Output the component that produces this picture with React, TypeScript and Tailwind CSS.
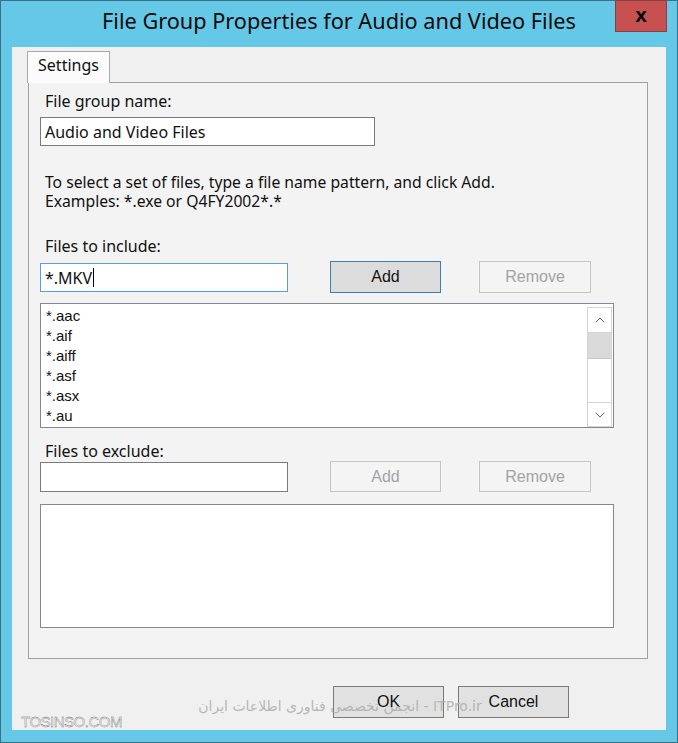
import { ChevronUp, ChevronDown } from 'lucide-react';

const items = ['*.aac', '*.aif', '*.aiff', '*.asf', '*.asx', '*.au'];

const ui = { fontFamily: '"Noto Sans", "Open Sans", sans-serif' };
const classic = { fontFamily: '"Liberation Sans", Arial, sans-serif' };

const Btn = ({ label, state }: { label: string; state: 'focus' | 'off' | 'normal' }) => {
  const tone =
    state === 'focus'
      ? 'bg-[#dcdcdc] border-[#3c7fb1] text-[#111]'
      : state === 'off'
      ? 'bg-[#f4f4f4] border-[#c4c4c4] text-[#a3a3a3]'
      : 'bg-[#e1e1e1] border-[#7a7a7a] text-[#111]';
  return (
    <div className={`flex items-center justify-center border text-[16px] ${tone}`} style={classic}>
      {label}
    </div>
  );
};

const ScrollBar = () => (
  <div className="flex flex-col w-[25px] border border-[#d4d4d4] bg-white">
    <div className="h-[25px] flex items-center justify-center border-b border-[#d4d4d4] text-[#606060]">
      <ChevronUp size={16} strokeWidth={1.5} />
    </div>
    <div className="h-[26px] bg-[#dadada] border-b border-[#c6c6c6]" />
    <div className="flex-1" />
    <div className="h-[24px] flex items-center justify-center border-t border-[#d4d4d4] text-[#606060]">
      <ChevronDown size={16} strokeWidth={1.5} />
    </div>
  </div>
);

export default function App() {
  return (
    <div className="relative w-[678px] h-[743px] bg-[#65c8e7] border border-[#3a6f84] flex flex-col" style={ui}>
      {/* title bar */}
      <div className="h-[46px] grid grid-cols-[1fr_auto_1fr]">
        <div />
        <div className="pt-[6px] text-[21.7px] leading-[28px] text-[#0b0b0b] whitespace-nowrap">
          File Group Properties for Audio and Video Files
        </div>
        <div className="flex justify-end pr-[10px]">
          <div className="w-[52px] h-[32px] -mt-px bg-[#c75050] border border-[#8a3f3f] flex items-center justify-center">
            <span className="text-[21px] font-bold leading-none text-black -mt-[3px]" style={classic}>
              x
            </span>
          </div>
        </div>
      </div>

      {/* client area */}
      <div className="mx-[11px] h-[683px] bg-[#f0f0f0] flex flex-col">
        <div className="pl-[15px] pt-[4px]">
          <div className="w-[83px] h-[32px] pb-[5px] bg-[#fbfbfb] border border-b-0 border-[#a9a9a9] flex items-center justify-center text-[16px] text-[#111] -mb-px relative z-10">
            Settings
          </div>
        </div>

        <div className="ml-[16px] w-[620px] h-[577px] border border-[#a0a0a0] bg-[#f3f3f3] pl-[11px] flex flex-col text-[16px] text-[#111]">
          <div className="mt-[8px] ml-[5px] leading-[20px]">File group name:</div>
          <div className="mt-[6px] w-[335px] h-[29px] bg-white border border-[#7a7a7a] flex items-center pl-[4px] leading-none">
            Audio and Video Files
          </div>

          <div className="mt-[27px] ml-[5px] text-[15.7px] leading-[19px]">
            <div>To select a set of files, type a file name pattern, and click Add.</div>
            <div>Examples: *.exe or Q4FY2002*.*</div>
          </div>

          <div className="mt-[25px] ml-[5px] leading-[20px]">Files to include:</div>
          <div className="mt-[5px] flex items-start">
            <div className="mt-[2px] w-[248px] h-[29px] bg-white border border-[#569de5] flex items-center pl-[4px] leading-none">
              *.MKV<span className="w-px h-[19px] bg-black ml-[1px]" />
            </div>
            <div className="ml-[42px] w-[111px] h-[32px] grid">
              <Btn label="Add" state="focus" />
            </div>
            <div className="ml-[38px] w-[112px] h-[32px] grid">
              <Btn label="Remove" state="off" />
            </div>
          </div>

          <div className="mt-[10px] w-[574px] h-[125px] bg-white border border-[#828790] flex">
            <div className="flex-1 pl-[5px] pt-[2px] text-[15px] leading-[20px] text-[#111]" style={classic}>
              {items.map((it) => (
                <div key={it}>{it}</div>
              ))}
            </div>
            <div className="pt-[3px] pr-px flex">
              <ScrollBar />
            </div>
          </div>

          <div className="mt-[13px] ml-[5px] leading-[20px]">Files to exclude:</div>
          <div className="flex items-start">
            <div className="mt-[1px] w-[248px] h-[30px] bg-white border border-[#7a7a7a]" />
            <div className="ml-[42px] w-[111px] h-[31px] grid">
              <Btn label="Add" state="off" />
            </div>
            <div className="ml-[38px] w-[112px] h-[31px] grid">
              <Btn label="Remove" state="off" />
            </div>
          </div>

          <div className="mt-[12px] w-[574px] h-[124px] bg-white border border-[#828790]" />
        </div>

        <div className="mt-[27px] pl-[321px] flex gap-[14px]">
          <div className="w-[111px] h-[32px] grid">
            <Btn label="OK" state="normal" />
          </div>
          <div className="w-[111px] h-[32px] grid">
            <Btn label="Cancel" state="normal" />
          </div>
        </div>
      </div>

      {/* watermarks */}
      <div
        className="absolute left-[20px] top-[713px] text-[15px] leading-none text-[#f6f6f6] tracking-[-0.5px]"
        style={{ ...classic, WebkitTextStroke: '0.35px #666' }}
      >
        TOSINSO.COM
      </div>
      <div
        className="absolute left-[190px] top-[695px] w-[298px] text-center text-[14px] leading-[20px] text-[#a8a8a8]/80 whitespace-nowrap"
        style={{ fontFamily: '"DejaVu Sans", "Noto Sans", sans-serif' }}
        dir="rtl"
      >
        ITPro.ir - انجمن تخصصی فناوری اطلاعات ایران
      </div>
    </div>
  );
}
